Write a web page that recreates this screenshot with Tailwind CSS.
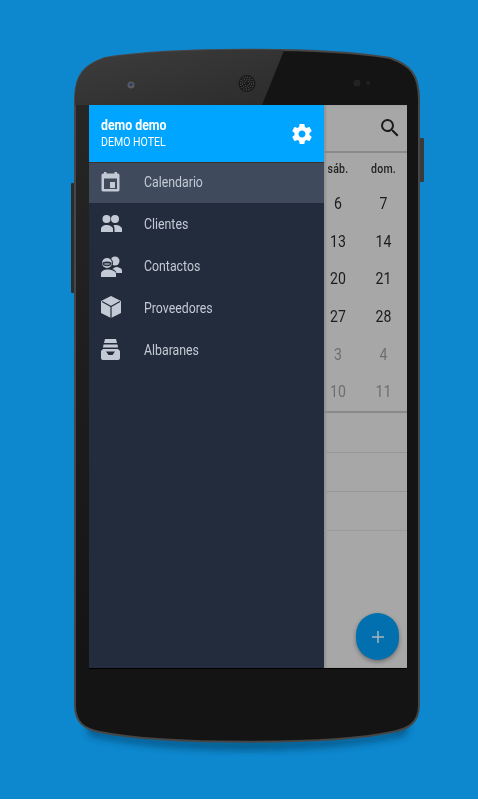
<!DOCTYPE html>
<html>
<head>
<meta charset="utf-8">
<script src="https://cdn.jsdelivr.net/npm/@tailwindcss/browser@4"></script>
</head>
<body class="bg-white">
<div class="relative w-[478px] h-[799px] overflow-hidden bg-[#0d88cf] font-['Roboto',sans-serif]">
  <!-- phone body -->
  <svg class="absolute inset-0" width="478" height="799" viewBox="0 0 478 799">
    <defs>
      <linearGradient id="gl" x1="0" y1="0" x2="1" y2="1"><stop offset="0" stop-color="#3d3d3d"/><stop offset="1" stop-color="#2b2b2b"/></linearGradient>
      <linearGradient id="bz" x1="0" y1="0" x2="0" y2="1"><stop offset="0" stop-color="#262626"/><stop offset="1" stop-color="#141414"/></linearGradient>
      <filter id="bl" x="-20%" y="-20%" width="140%" height="140%"><feGaussianBlur stdDeviation="4"/></filter>
      <clipPath id="bd"><path d="M75 100C75 74 85 65 105 58C170 47 325 47 390 58C410 65 419 74 419 100V705C419 723 408 729 392 732C330 745 165 745 100 732C85 729 75 723 75 705Z"/></clipPath>
    </defs>
    <path d="M85 712C90 728 95 731 108 733C165 746 330 746 388 733C400 731 405 728 410 712L405 734C330 753 165 753 90 734Z" fill="#04324f" opacity=".9" filter="url(#bl)"/>
    <rect x="71" y="183" width="5" height="110" rx="1" fill="#2c2c2c"/>
    <rect x="418" y="138" width="6" height="44" rx="1" fill="#3a3a3a"/>
    <path d="M75 100C75 74 85 65 105 58C170 47 325 47 390 58C410 65 419 74 419 100V705C419 723 408 729 392 732C330 745 165 745 100 732C85 729 75 723 75 705Z" fill="#141414" stroke="#464646" stroke-width="2"/>
    <g clip-path="url(#bd)">
      <path d="M70 48H285L262 105H70Z" fill="url(#gl)"/>
      <rect x="76" y="105" width="13" height="565" fill="url(#bz)"/>
    </g>
    <circle cx="131" cy="85" r="3.500" fill="#5a5a5a"/><circle cx="131" cy="84.500" r="1.600" fill="#2a3a7a"/>
    <circle cx="247" cy="83.500" r="8.500" fill="#1a1a1a"/>
    <g fill="none" stroke="#6a6a6a" stroke-width="1" stroke-dasharray="1 1.500"><circle cx="247" cy="83.500" r="6.500"/><circle cx="247" cy="83.500" r="4.500"/><circle cx="247" cy="83.500" r="2.500"/></g>
    <circle cx="357" cy="83" r="3.500" fill="#222"/><circle cx="368" cy="83" r="2" fill="#222"/>
  </svg>

  <!-- screen -->
  <div class="absolute left-[89px] top-[105px] w-[318px] h-[563px] flex bg-[#a7a7a7] shadow-[0_1px_0_#000]">
    <!-- drawer -->
    <aside class="w-[235px] shrink-0 flex flex-col bg-[#232c3d] text-[#c3cad5] z-10">
      <header class="h-[58px] shrink-0 flex items-center justify-between pl-3 pr-[10px] bg-[#00a5ff] text-white border-b border-[#3a3326]">
        <div class="flex flex-col origin-left scale-x-[.88]">
          <span class="text-[14px] leading-[17px] font-bold">demo demo</span>
          <span class="text-[12px] leading-[16px]">DEMO HOTEL</span>
        </div>
        <svg width="24" height="24" viewBox="0 0 24 24" fill="#fff"><path d="M19.43 12.98c.04-.32.07-.64.07-.98s-.03-.66-.07-.98l2.11-1.65c.19-.15.24-.42.12-.64l-2-3.46c-.12-.22-.39-.3-.61-.22l-2.49 1c-.52-.4-1.08-.73-1.69-.98l-.38-2.65C14.46 2.18 14.25 2 14 2h-4c-.25 0-.46.18-.49.42l-.38 2.65c-.61.25-1.17.59-1.69.98l-2.49-1c-.23-.09-.49 0-.61.22l-2 3.46c-.13.22-.07.49.12.64l2.11 1.65c-.04.32-.07.65-.07.98s.03.66.07.98l-2.11 1.65c-.19.15-.24.42-.12.64l2 3.46c.12.22.39.3.61.22l2.49-1c.52.4 1.08.73 1.69.98l.38 2.65c.03.24.24.42.49.42h4c.25 0 .46-.18.49-.42l.38-2.65c.61-.25 1.17-.59 1.69-.98l2.49 1c.23.09.49 0 .61-.22l2-3.46c.12-.22.07-.49-.12-.64l-2.11-1.65zM12 15.5c-1.93 0-3.5-1.57-3.5-3.5s1.57-3.5 3.5-3.5 3.5 1.57 3.5 3.5-1.57 3.5-3.5 3.5z"/></svg>
      </header>
      <nav class="flex flex-col text-[14px]">
        <a class="h-[40px] flex items-center bg-[#3f4a5d] pb-[2px]">
          <span class="w-[44px] pl-[10px] flex"><svg width="24" height="24" viewBox="0 0 24 24" fill="#c3cad5"><path fill-rule="evenodd" d="M5 2h2.500v1.500h8V2H18v1.500h.5A1.800 1.800 0 0 1 20.500 5.500v14a1.800 1.800 0 0 1-2 2h-14a1.800 1.800 0 0 1-2-2v-14a1.800 1.800 0 0 1 2-2H5zM5 8.500v10.500h13V8.500z"/><path d="M11 12h5v6h-5z"/></svg></span>
          <span class="ml-[11px] origin-left scale-x-[.88]">Calendario</span>
        </a>
        <a class="h-[42px] flex items-center">
          <span class="w-[44px] pl-[10px] flex"><svg width="24" height="24" viewBox="0 0 24 24" fill="#c3cad5"><circle cx="7.500" cy="7" r="4"/><circle cx="16" cy="7" r="4"/><path d="M2 20v-3c0-2.500 3-4 5.500-4s6.500 1.500 6.500 4v3z"/><path d="M15.500 20v-3.500c0-1.200-.4-2.300-1-3.200.7-.2 1.400-.3 2-.3 2.800 0 6.500 1.500 6.500 4v3z"/></svg></span>
          <span class="ml-[11px] origin-left scale-x-[.88]">Clientes</span>
        </a>
        <a class="h-[42px] flex items-center">
          <span class="w-[44px] pl-[10px] flex"><svg width="24" height="24" viewBox="0 0 24 24" fill="#c3cad5"><circle cx="16" cy="7" r="4.500"/><path d="M17 13c3 .2 6 1.400 6 3.500V19h-5.500c-.5-1.800-2-3.300-4-4 1-.9 2.300-1.600 3.500-2z"/><circle cx="8" cy="9" r="6" fill="#232c3d"/><circle cx="8" cy="9" r="5"/><path d="M3.500 8.500c2.500-1.200 6.500-1.200 9 0v1.500c-.5 1.500-2.500 2.200-4.500 2.200S4 11.500 3.500 10z" fill="#232c3d"/><path d="M8 9c-1.500 0-2.800.4-3.500.8.500 1 2 1.400 3.500 1.400s3-.4 3.500-1.400C10.800 9.400 9.500 9 8 9z" fill="#7f8897"/><path d="M2 23v-3.500C2 17 5.500 15.500 8.500 15.500s8.500 1.500 8.500 4V23z"/></svg></span>
          <span class="ml-[11px] origin-left scale-x-[.88]">Contactos</span>
        </a>
        <a class="h-[42px] flex items-center">
          <span class="w-[44px] pl-[10px] flex"><svg width="24" height="24" viewBox="0 0 24 24"><path d="M12 0l10 5v12l-10 5-10-5V5z" fill="#c3cad5"/><path d="M3 5.500l9 5 9-5M12 10.500V22" fill="none" stroke="#232c3d" stroke-width="1.200"/></svg></span>
          <span class="ml-[11px] origin-left scale-x-[.88]">Proveedores</span>
        </a>
        <a class="h-[42px] flex items-center">
          <span class="w-[44px] pl-[10px] flex"><svg width="24" height="24" viewBox="0 0 24 24" fill="#c3cad5"><path d="M6 1h11l1 4H5z"/><path d="M4.500 6.500h14l.5 3H4z"/><path fill-rule="evenodd" d="M4 11h15l2 2v7a2 2 0 0 1-2 2H4a2 2 0 0 1-2-2v-7zM7 13.500l2.500 3.500h4l2.500-3.500z"/></svg></span>
          <span class="ml-[11px] origin-left scale-x-[.88]">Albaranes</span>
        </a>
      </nav>
    </aside>

    <!-- dimmed calendar -->
    <main class="relative flex-1 flex flex-col text-[#1b1b1b] shadow-[inset_2px_0_2px_rgba(0,0,0,.12)]">
      <div class="h-[48px] shrink-0 flex items-center justify-end pr-[5px] pb-[1px] border-b-2 border-[#8a8a8a]">
        <svg width="24" height="24" viewBox="0 0 24 24" fill="#1a1a1a"><path d="M15.500 14h-.79l-.28-.27A6.470 6.470 0 0 0 16 9.500 6.500 6.500 0 1 0 9.500 16c1.610 0 3.090-.59 4.230-1.570l.27.28v.79l5 4.990L20.490 19l-4.990-5zm-6 0C7.010 14 5 11.990 5 9.500S7.010 5 9.500 5 14 7.010 14 9.500 11.990 14 9.500 14z"/></svg>
      </div>
      <div class="h-[32px] shrink-0 -ml-[9px] grid grid-cols-[46px_45px] items-center text-center text-[12px] font-medium text-[#222] tracking-[.3px] *:scale-x-[.88]">
        <span>sáb.</span><span>dom.</span>
      </div>
      <div class="grid -ml-[9px] grid-cols-[46px_45px] auto-rows-[37.7px] items-center text-center text-[16px] h-[226px] *:scale-x-[.88]">
        <span>6</span><span>7</span>
        <span>13</span><span>14</span>
        <span>20</span><span>21</span>
        <span>27</span><span>28</span>
        <span class="text-[#6e6e6e]">3</span><span class="text-[#6e6e6e]">4</span>
        <span class="text-[#6e6e6e]">10</span><span class="text-[#6e6e6e]">11</span>
      </div>
      <div class="border-t-2 border-[#8a8a8a] h-[42px] shrink-0 border-b border-b-[#979797]"></div>
      <div class="h-[39px] shrink-0 border-b border-[#979797]"></div>
      <div class="h-[39px] shrink-0 border-b border-[#9b9b9b]"></div>
      <div class="absolute left-[32px] top-[508px] w-[43px] h-[47px] rounded-full bg-[#0270ae] shadow-[0_2px_4px_rgba(0,0,0,.35)] flex items-center justify-center">
        <svg width="14" height="14" viewBox="0 0 14 14" stroke="#a9b4bb" stroke-width="1.500"><path d="M7 1v12M1 7h12"/></svg>
      </div>
    </main>
  </div>
</div>
</body>
</html>
